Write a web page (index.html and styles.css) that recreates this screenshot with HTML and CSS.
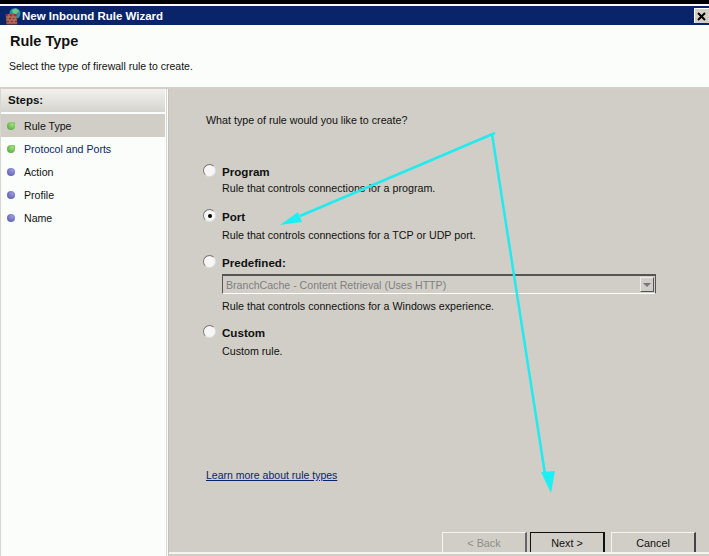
FILE: index.html
```html
<!DOCTYPE html>
<html lang="en">
<head>
    <meta charset="UTF-8">
    <meta name="viewport" content="width=device-width, initial-scale=1.0">
    <title>New Inbound Rule Wizard</title>
    <link rel="stylesheet" href="styles.css">
</head>
<body>
    <div class="window">
        <div class="titlebar">
            <svg class="app-icon" width="17" height="18" viewBox="0 0 17 18">
                <circle cx="10" cy="6.5" r="5.5" fill="#2f8f9c"/>
                <path d="M7 3 L11 1.5 L14 4 L11 7 L8 6 Z" fill="#6fc48a"/>
                <path d="M0.5 7 L11.5 7 L12.5 17.5 L1.5 17.5 Z" fill="#8a3a30"/>
                <path d="M1 10 H12 M1 13 H12 M1.5 16 H12 M4 7 V10 M8 7 V10 M3 10 V13 M7 10 V13 M10 10 V13 M5 13 V16 M9 13 V16" stroke="#c98f7c" stroke-width="0.8" fill="none"/>
            </svg>
            <span class="titlebar-text">New Inbound Rule Wizard</span>
            <div class="close-btn">
                <svg width="9" height="9" viewBox="0 0 9 9"><path d="M1 1 L8 8 M8 1 L1 8" stroke="#000" stroke-width="2"/></svg>
            </div>
        </div>
        <div class="header">
            <h1 class="header-title">Rule Type</h1>
            <p class="header-sub">Select the type of firewall rule to create.</p>
        </div>
        <div class="body-row">
            <div class="sidebar">
                <div class="steps-title">Steps:</div>
                <ul class="steps">
                    <li class="step current"><span class="dot green"></span>Rule Type</li>
                    <li class="step"><span class="dot green"></span><span class="navy">Protocol and Ports</span></li>
                    <li class="step"><span class="dot blue"></span>Action</li>
                    <li class="step"><span class="dot blue"></span>Profile</li>
                    <li class="step"><span class="dot blue"></span>Name</li>
                </ul>
            </div>
            <div class="panel">
                <p class="question">What type of rule would you like to create?</p>
                <div class="option opt-program">
                    <span class="radio"></span>
                    <div>
                        <div class="opt-name">Program</div>
                        <div class="opt-desc">Rule that controls connections for a program.</div>
                    </div>
                </div>
                <div class="option opt-port">
                    <span class="radio checked"></span>
                    <div>
                        <div class="opt-name">Port</div>
                        <div class="opt-desc">Rule that controls connections for a TCP or UDP port.</div>
                    </div>
                </div>
                <div class="option opt-predefined">
                    <span class="radio"></span>
                    <div>
                        <div class="opt-name">Predefined:</div>
                        <div class="select">
                            <span class="select-text">BranchCache - Content Retrieval (Uses HTTP)</span>
                            <span class="select-btn"><span class="select-arrow"></span></span>
                        </div>
                        <div class="opt-desc">Rule that controls connections for a Windows experience.</div>
                    </div>
                </div>
                <div class="option opt-custom">
                    <span class="radio"></span>
                    <div>
                        <div class="opt-name">Custom</div>
                        <div class="opt-desc">Custom rule.</div>
                    </div>
                </div>
                <a class="learn" href="#">Learn more about rule types</a>
                <div class="buttons">
                    <button class="btn disabled">&lt; Back</button>
                    <button class="btn default">Next &gt;</button>
                    <button class="btn cancel">Cancel</button>
                </div>
            </div>
        </div>
    </div>
    <!-- hand drawn arrows on top of the screenshot -->
    <svg class="arrows" width="709" height="556" viewBox="0 0 709 556">
        <path d="M495 133 L300 216" stroke="#22eaee" stroke-width="2.5" fill="none"/>
        <path d="M280 225 L298 212 L302 222 Z" fill="#1cf0f2"/>
        <path d="M492 134 L545 474" stroke="#22eaee" stroke-width="2.5" fill="none"/>
        <path d="M551 493 L541 472 L555 471 Z" fill="#1cf0f2"/>
    </svg>
</body>
</html>
```

FILE: styles.css
```css
body {
    margin: 0;
    width: 709px;
    height: 556px;
    overflow: hidden;
    background: #000;
    font-family: "Liberation Sans", Arial, sans-serif;
    font-size: 11px;
    color: #111;
    position: relative;
}

.window {
    margin-top: 4px;
    height: 552px;
    background: #fbfdfb;
    padding-top: 2px;
    box-sizing: border-box;
    display: flex;
    flex-direction: column;
}

/* Title bar */
.titlebar {
    height: 19px;
    flex: none;
    background: #0a246a;
    display: flex;
    align-items: center;
    padding-left: 5px;
    color: #fff;
    font-weight: bold;
    font-size: 11.5px;
}

.app-icon {
    flex: none;
}

.titlebar-text {
    flex: 1;
}

.close-btn {
    width: 12px;
    height: 14px;
    background: #d4d0c8;
    border-top: 1px solid #fff;
    border-left: 1px solid #fff;
    display: flex;
    align-items: center;
    padding-left: 2px;
}

/* Header */
.header {
    height: 62px;
    flex: none;
    box-sizing: border-box;
    padding: 8px 0 0 9px;
}

.header-title {
    margin: 0 0 0 1px;
    font-size: 14.5px;
    line-height: 16px;
    font-weight: bold;
}

.header-sub {
    margin: 10px 0 0;
    font-size: 10.5px;
    line-height: 14px;
}

/* Main area */
.body-row {
    flex: 1;
    display: flex;
    border-top: 2px solid #d4d0c8;
    min-height: 0;
}

.sidebar {
    width: 167px;
    flex: none;
    border-right: 1px solid #d8d6d0;
    border-left: 1px solid #d8d6d0;
    box-sizing: border-box;
}

.steps-title {
    height: 23px;
    line-height: 23px;
    padding-left: 7px;
    font-size: 11.5px;
    font-weight: bold;
    background: linear-gradient(#f2f1ee, #d6d4ce);
    margin-right: 1px;
}

.steps {
    list-style: none;
    margin: 2px 1px 0 0;
    padding: 0;
    font-size: 10.6px;
}

.step {
    height: 23px;
    display: flex;
    align-items: center;
    padding-left: 6px;
}

.current {
    background: #d0cec7;
}

.navy {
    color: #0a246a;
}

.dot {
    width: 8px;
    height: 8px;
    border-radius: 50%;
    margin-right: 9px;
}

.green {
    border-radius: 55% 15% 55% 55%;
    background: radial-gradient(circle at 65% 30%, #a6e07a, #3f9f36);
}

.blue {
    background: radial-gradient(circle at 65% 30%, #9a98e0, #5452a8);
}

.panel {
    flex: 1;
    margin-left: 1px;
    background: #d0cec7;
    padding-left: 37px;
    display: flex;
    flex-direction: column;
    border-left: 1px solid #c4c2bc;
}

.question {
    margin: 0;
    padding-top: 23px;
    line-height: 16px;
    font-size: 10.7px;
}

.option {
    display: flex;
    align-items: flex-start;
    gap: 7px;
    margin-left: -3px;
}

.opt-program { margin-top: 36px; }
.opt-port { margin-top: 14px; }
.opt-predefined { margin-top: 13px; }
.opt-custom { margin-top: 12px; }

.radio {
    width: 13px;
    height: 13px;
    flex: none;
    box-sizing: border-box;
    border-radius: 50%;
    background: #f6f6f4;
    border: 1px solid #777;
    border-right-color: #ddd;
    border-bottom-color: #ddd;
    margin-right: -1px;
    position: relative;
}

.checked::after {
    content: "";
    position: absolute;
    left: 3.5px;
    top: 3.5px;
    width: 4px;
    height: 4px;
    border-radius: 50%;
    background: #000;
}

.opt-name {
    font-size: 11.6px;
    font-weight: bold;
    line-height: 15px;
}

.opt-desc {
    margin-top: 3px;
    line-height: 14px;
    font-size: 10.7px;
}

.opt-program .opt-desc { margin-top: 2px; }
.opt-port .opt-desc { margin-top: 4px; }
.opt-custom .opt-desc { margin-top: 4px; }

.select {
    width: 434px;
    height: 20px;
    box-sizing: border-box;
    margin-top: 4px;
    border: 1px solid #555;
    border-top-width: 2px;
    border-bottom: 1px solid #fff;
    display: flex;
    align-items: center;
    justify-content: space-between;
    color: #808080;
    padding-left: 3px;
    font-size: 10.6px;
}

.select + .opt-desc {
    margin-top: 5px;
}

.select-btn {
    width: 14px;
    height: 15px;
    border: 1px solid #eee;
    border-bottom-color: #555;
    border-right-color: #555;
    box-sizing: border-box;
    display: flex;
    align-items: center;
    justify-content: center;
    margin-right: 1px;
}

.select-arrow {
    border: 4px solid transparent;
    border-top: 4px solid #777;
    border-bottom: 0;
}

.learn {
    margin-top: 110px;
    line-height: 14px;
    color: #0a246a;
    font-size: 10.5px;
}

.buttons {
    margin-top: auto;
    margin-left: -37px;
    display: flex;
    padding-left: 273px;
    margin-bottom: 4px;
    box-shadow: 0 2px 0 #f4f4f0;
}

.btn {
    width: 85px;
    height: 20px;
    padding: 0;
    box-sizing: border-box;
    background: #d0cec7;
    border: 1px solid #f4f4f0;
    border-bottom: 0;
    border-right: 2px solid #444;
    font-family: inherit;
    font-size: 10.8px;
    color: #111;
}

.disabled {
    color: #8f8f8c;
    border-right-color: #666;
    margin-right: 3px;
}

.default {
    width: 75px;
    border: 1px solid #111;
    border-bottom: 0;
    border-right-width: 2px;
    margin-right: 6px;
}

.arrows {
    position: absolute;
    left: 0;
    top: 0;
    pointer-events: none;
}
```
